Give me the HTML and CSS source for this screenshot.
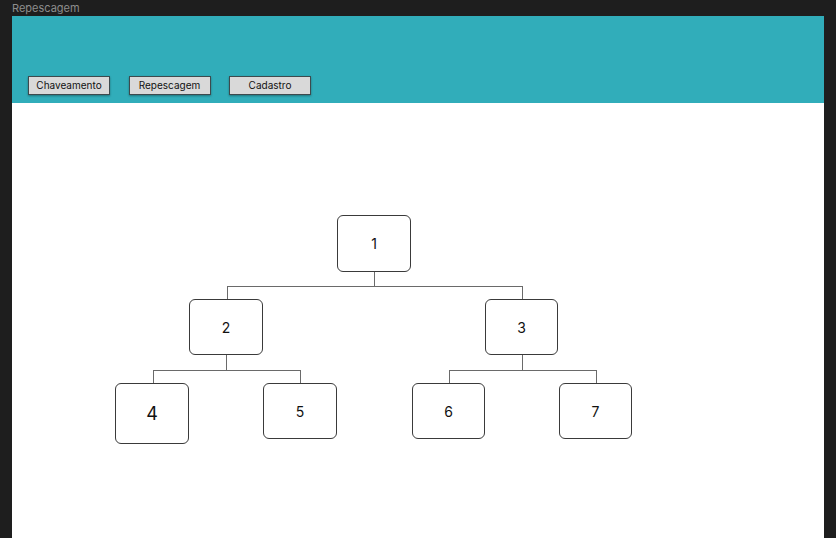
FILE: index.html
```html
<!DOCTYPE html>
<html lang="pt">
<head>
<meta charset="utf-8">
<title>Repescagem</title>
<link rel="stylesheet" href="styles.css">
</head>
<body>
<div class="frame-label">Repescagem</div>
<div class="frame">
  <header class="topbar">
    <nav class="nav">
      <button class="nav-btn">Chaveamento</button>
      <button class="nav-btn">Repescagem</button>
      <button class="nav-btn">Cadastro</button>
    </nav>
  </header>
  <main class="canvas">
    <div class="diagram">
      <svg class="links" width="812" height="420" viewBox="0 0 812 420" shape-rendering="crispEdges">
        <g stroke="#6a6a6a" stroke-width="1" fill="none">
          <path d="M362.5 168 V183.5 M215.5 196 V183.5 H510.5 V196"/>
          <path d="M214.5 252 V267.5 M141.5 280 V267.5 H288.5 V280"/>
          <path d="M510.5 252 V267.5 M437.5 280 V267.5 H584.5 V280"/>
        </g>
      </svg>
      <div class="node n1">1</div>
      <div class="node n2">2</div>
      <div class="node n3">3</div>
      <div class="node n4 big">4</div>
      <div class="node n5">5</div>
      <div class="node n6">6</div>
      <div class="node n7">7</div>
    </div>
  </main>
</div>
</body>
</html>
```
FILE: styles.css
```css
html, body {
  margin: 0;
  padding: 0;
  height: 538px;
  overflow: hidden;
}
body {
  background: #1e1e1e;
  font-family: Inter, "Noto Sans", "Liberation Sans", sans-serif;
}
.frame-label {
  height: 16px;
  padding-left: 12px;
  font-size: 11px;
  line-height: 16px;
  color: #8d8d8d;
}
.frame {
  margin-left: 12px;
  width: 812px;
  height: 540px;
  background: #ffffff;
  display: flex;
  flex-direction: column;
}
.topbar {
  height: 87px;
  background: #31adba;
  box-sizing: border-box;
  padding: 60px 0 0 16px;
}
.nav {
  display: flex;
  gap: 18.5px;
}
.nav-btn {
  width: 82px;
  height: 19px;
  box-sizing: border-box;
  margin: 0;
  padding: 0;
  background: #d9d9d9;
  border: 1px solid #3d4a4e;
  box-shadow: 0 1px 2px rgba(0, 0, 0, 0.35);
  font-family: Inter, "Noto Sans", "Liberation Sans", sans-serif;
  font-size: 10px;
  color: #111;
  line-height: 17px;
}
.canvas {
  flex: 1;
}
.diagram {
  position: relative;
  width: 812px;
  height: 420px;
}
.links {
  position: absolute;
  left: 0;
  top: 0;
}
.node {
  position: absolute;
  box-sizing: border-box;
  width: 74px;
  height: 56px;
  border: 1px solid #3a3a3a;
  border-radius: 6px;
  background: #fff;
  display: flex;
  align-items: center;
  justify-content: center;
  font-size: 14px;
  color: #111;
}
.node.big {
  font-size: 18px;
}
.n1 { left: 325px; top: 112px; height: 57px; }
.n2 { left: 177px; top: 196px; }
.n3 { left: 473px; top: 196px; width: 73px; }
.n4 { left: 103px; top: 280px; height: 61px; }
.n5 { left: 251px; top: 280px; }
.n6 { left: 400px; top: 280px; width: 73px; }
.n7 { left: 547px; top: 280px; width: 73px; }
```
